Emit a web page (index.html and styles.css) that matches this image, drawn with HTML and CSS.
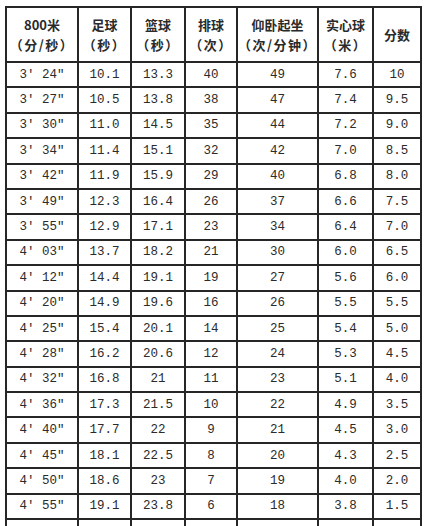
FILE: index.html
```html
<!DOCTYPE html>
<html lang="zh">
<head>
<meta charset="utf-8">
<link rel="stylesheet" href="styles.css">
</head>
<body>
<table class="score">
  <colgroup>
    <col class="c1"><col class="c2"><col class="c3"><col class="c4"><col class="c5"><col class="c6"><col class="c7">
  </colgroup>
  <thead>
    <tr class="head">
      <th><span class="l">800米</span><span class="l p">（分/秒）</span></th>
      <th><span class="l">足球</span><span class="l p">（秒）</span></th>
      <th><span class="l">篮球</span><span class="l p">（秒）</span></th>
      <th><span class="l">排球</span><span class="l p">（次）</span></th>
      <th><span class="l">仰卧起坐</span><span class="l p">（次/分钟）</span></th>
      <th><span class="l">实心球</span><span class="l p">（米）</span></th>
      <th><span class="l">分数</span></th>
    </tr>
  </thead>
  <tbody>
    <tr><td>3′ 24″</td><td>10.1</td><td>13.3</td><td>40</td><td>49</td><td>7.6</td><td>10</td></tr>
    <tr><td>3′ 27″</td><td>10.5</td><td>13.8</td><td>38</td><td>47</td><td>7.4</td><td>9.5</td></tr>
    <tr><td>3′ 30″</td><td>11.0</td><td>14.5</td><td>35</td><td>44</td><td>7.2</td><td>9.0</td></tr>
    <tr><td>3′ 34″</td><td>11.4</td><td>15.1</td><td>32</td><td>42</td><td>7.0</td><td>8.5</td></tr>
    <tr><td>3′ 42″</td><td>11.9</td><td>15.9</td><td>29</td><td>40</td><td>6.8</td><td>8.0</td></tr>
    <tr><td>3′ 49″</td><td>12.3</td><td>16.4</td><td>26</td><td>37</td><td>6.6</td><td>7.5</td></tr>
    <tr><td>3′ 55″</td><td>12.9</td><td>17.1</td><td>23</td><td>34</td><td>6.4</td><td>7.0</td></tr>
    <tr><td>4′ 03″</td><td>13.7</td><td>18.2</td><td>21</td><td>30</td><td>6.0</td><td>6.5</td></tr>
    <tr><td>4′ 12″</td><td>14.4</td><td>19.1</td><td>19</td><td>27</td><td>5.6</td><td>6.0</td></tr>
    <tr><td>4′ 20″</td><td>14.9</td><td>19.6</td><td>16</td><td>26</td><td>5.5</td><td>5.5</td></tr>
    <tr><td>4′ 25″</td><td>15.4</td><td>20.1</td><td>14</td><td>25</td><td>5.4</td><td>5.0</td></tr>
    <tr><td>4′ 28″</td><td>16.2</td><td>20.6</td><td>12</td><td>24</td><td>5.3</td><td>4.5</td></tr>
    <tr><td>4′ 32″</td><td>16.8</td><td>21</td><td>11</td><td>23</td><td>5.1</td><td>4.0</td></tr>
    <tr><td>4′ 36″</td><td>17.3</td><td>21.5</td><td>10</td><td>22</td><td>4.9</td><td>3.5</td></tr>
    <tr><td>4′ 40″</td><td>17.7</td><td>22</td><td>9</td><td>21</td><td>4.5</td><td>3.0</td></tr>
    <tr><td>4′ 45″</td><td>18.1</td><td>22.5</td><td>8</td><td>20</td><td>4.3</td><td>2.5</td></tr>
    <tr><td>4′ 50″</td><td>18.6</td><td>23</td><td>7</td><td>19</td><td>4.0</td><td>2.0</td></tr>
    <tr><td>4′ 55″</td><td>19.1</td><td>23.8</td><td>6</td><td>18</td><td>3.8</td><td>1.5</td></tr>
    <tr class="cut"><td></td><td></td><td></td><td></td><td></td><td></td><td></td></tr>
  </tbody>
</table>
</body>
</html>
```
FILE: styles.css
```css
html, body {
  margin: 0;
  padding: 0;
  background: #ffffff;
}
body {
  padding: 6px 0 0 5px;
  overflow: hidden;
  height: 526px;
  box-sizing: border-box;
}
.score {
  border-collapse: collapse;
  table-layout: fixed;
  width: 417px;
  color: #2b2b2b;
}
.c1 { width: 72px; }
.c2 { width: 53px; }
.c3 { width: 54px; }
.c4 { width: 52px; }
.c5 { width: 81px; }
.c6 { width: 55px; }
.c7 { width: 48px; }
.score th, .score td {
  border: 2px solid #262626;
  padding: 0;
  text-align: center;
  vertical-align: middle;
}
.score th {
  font-family: "Noto Sans CJK SC", sans-serif;
  font-weight: 700;
  font-size: 13px;
  color: #2a2a2a;
  height: 53px;
  line-height: 20px;
}
.l {
  display: block;
  height: 20px;
  line-height: 20px;
  white-space: nowrap;
}
.p {
  letter-spacing: 1.5px;
}
.score td {
  font-family: "Liberation Mono", "DejaVu Sans Mono", monospace;
  font-size: 12.5px;
  height: 23.4px;
  line-height: 14px;
  white-space: nowrap;
}
.cut td {
  height: 20px;
}
```
